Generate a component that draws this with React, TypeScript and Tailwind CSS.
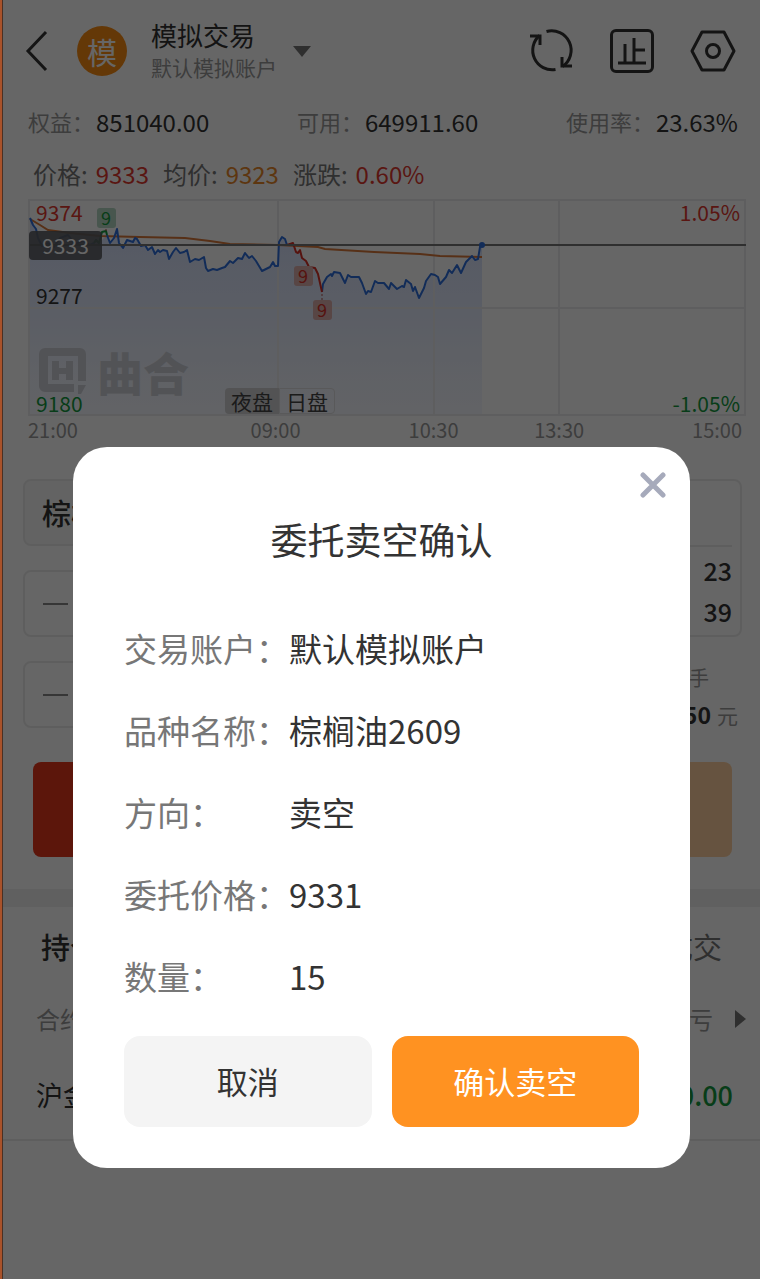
import React, { useState } from 'react';

const PRICE_NIGHT =
  '2,19 5,26 8,30 10,39 14,47 20,44 26,48 32,39 40,36 47,45 55,42 62,46 66,44 68,41 71,44';
const PRICE_GREEN = '66,44 68,41 71,44 74,33 78,32 79,36';
const PRICE_DAY =
  '79,36 82,44 86,39 89,30 91,44 95,49 99,41 105,43 107,39 109,40 113,47 117,46 120,51 124,48 127,55 130,51 132,53 135,51 139,52 141,60 145,53 148,49 152,54 156,53 159,51 162,63 167,60 171,61 176,58 178,69 180,72 185,70 189,71 194,69 197,68 202,62 205,64 210,59 214,60 217,54 221,59 224,57 228,62 234,72 238,70 242,68 245,63 247,67 250,67 251,43 254,38 257,40 259,46';
const PRICE_RED =
  '259,46 262,45 265,44 268,53 270,54 272,51 274,59 278,62 281,68 287,69 290,75 292,84 294,93';
const PRICE_LAST =
  '294,93 295,85 299,78 303,75 304,77 306,73 312,74 317,84 320,76 323,78 331,78 334,84 338,95 340,92 343,93 347,82 350,84 356,84 361,90 363,84 369,90 374,87 376,88 378,81 383,85 385,92 387,88 391,99 396,89 398,82 403,75 407,76 410,78 412,85 418,78 421,71 424,74 429,66 433,74 438,63 444,57 447,61 450,60 452,48 454,46';
const AVERAGE =
  '2,20 12,26 20,31 42,34 72,37 112,38 157,39 182,42 202,45 250,46 290,48 297,50 346,53 392,55 412,57 454,58';

const orderRows = [
  { label: '交易账户：', value: '默认模拟账户' },
  { label: '品种名称：', value: '棕榈油2609' },
  { label: '方向：', value: '卖空' },
  { label: '委托价格：', value: '9331' },
  { label: '数量：', value: '15' },
];

function Header() {
  return (
    <header className="flex h-[102px] items-center pl-[22px] pr-6">
      <button aria-label="返回">
        <svg width="24" height="42" viewBox="0 0 24 42" fill="none" stroke="#333" strokeWidth="3">
          <path d="M21 2 3 21l18 19" />
        </svg>
      </button>
      <div className="ml-7 flex size-[50px] items-center justify-center rounded-full bg-[#f98c12] text-[30px] leading-none text-white">
        模
      </div>
      <button className="ml-6 flex items-center gap-4 text-left">
        <span className="block">
          <span className="block text-[26px] leading-8 text-[#333]">模拟交易</span>
          <span className="block text-[21px] leading-8 text-[#999]">默认模拟账户</span>
        </span>
        <svg width="18" height="11" viewBox="0 0 18 11" fill="#777">
          <path d="M0 0h18L9 11z" />
        </svg>
      </button>
      <div className="ml-auto flex items-center gap-9">
        <button aria-label="刷新">
          <svg width="46" height="46" viewBox="0 0 46 46" fill="none" stroke="#333" strokeWidth="3">
            <path d="M18.5 3.5A19.5 19.5 0 0 1 34.5 38.5" />
            <path d="M27.5 41.5A19.5 19.5 0 0 1 11.5 7.5" />
            <path d="M2 8h10v9" />
            <path d="M44 38h-10v-9" />
          </svg>
        </button>
        <button aria-label="止损" className="flex size-11 items-center justify-center rounded-md border-3 border-[#333]">
          <svg width="28" height="30" viewBox="0 0 28 30" fill="none" stroke="#333" strokeWidth="3">
            <path d="M7 8v18M16 2v24M16 14h11M0 27h28" />
          </svg>
        </button>
        <button aria-label="设置">
          <svg width="46" height="42" viewBox="0 0 46 42" fill="none" stroke="#333" strokeWidth="3" strokeLinejoin="round">
            <path d="M12 2h22l10 19-10 19H12L2 21z" />
            <circle cx="23" cy="21" r="6.5" />
          </svg>
        </button>
      </div>
    </header>
  );
}

function Stat({ label, value }: { label: string; value: string }) {
  return (
    <div className="flex items-center gap-0.5 text-2xl text-[#333]">
      <span className="text-[22px] text-[#999]">{label}</span>
      <span>{value}</span>
    </div>
  );
}

function Quote({ label, value, color }: { label: string; value: string; color: string }) {
  return (
    <div className="flex items-center gap-2 text-2xl text-[#777]">
      <span>{label}</span>
      <span className={color}>{value}</span>
    </div>
  );
}

function Chart() {
  return (
    <section className="ml-[25px] mr-3.5">
      <div className="relative">
        <svg viewBox="0 0 718 217" className="block w-full" fill="none">
          <defs>
            <linearGradient id="area" x1="0" y1="0" x2="0" y2="1">
              <stop offset="0" stopColor="#6a90f0" stopOpacity="0.3" />
              <stop offset="1" stopColor="#6a90f0" stopOpacity="0.06" />
            </linearGradient>
          </defs>
          <path
            d={`M2,217 L${PRICE_NIGHT} ${PRICE_DAY} ${PRICE_RED} ${PRICE_LAST} L454,217Z`}
            fill="url(#area)"
          />
          <path
            d="M1 1H717V216H1ZM1 109H717M250 1V216M406 1V216M531 1V216"
            stroke="#ececee"
            strokeWidth="2"
          />
          <polyline points={AVERAGE} stroke="#d9793a" strokeWidth="2" />
          <g strokeWidth="2" strokeLinejoin="round">
            <polyline points={PRICE_NIGHT} stroke="#2f6fdc" />
            <polyline points={PRICE_DAY} stroke="#2f6fdc" />
            <polyline points={PRICE_LAST} stroke="#2f6fdc" />
            <polyline points={PRICE_GREEN} stroke="#149a40" />
            <polyline points={PRICE_RED} stroke="#d63027" />
          </g>
          <path d="M2 46H718" stroke="#777" strokeWidth="2" />
          <circle cx="454" cy="46" r="3" fill="#2f6fdc" />
          <path d="M78 30v4M275 71v4M294 95v6" stroke="#b05048" strokeWidth="1" strokeDasharray="2 2" />
          <rect x="69" y="9" width="19" height="20" rx="3" fill="#b4d6c2" />
          <rect x="266" y="67" width="19" height="20" rx="3" fill="#dcaeac" />
          <rect x="285" y="101" width="19" height="20" rx="3" fill="#dcaeac" />
          <g fontSize="18" textAnchor="middle">
            <text x="78" y="26" fill="#149a40">9</text>
            <text x="275" y="84" fill="#d63027">9</text>
            <text x="294" y="118" fill="#d63027">9</text>
          </g>
        </svg>

        <div className="absolute bottom-[22px] left-[11px] flex items-center gap-2.5 text-[#cdd0d8]">
          <svg width="48" height="46" viewBox="0 0 48 46" fill="currentColor">
            <path
              fillRule="evenodd"
              d="M6 0h35a6 6 0 0 1 6 6v27h-8V8H9v28h26v8H6a6 6 0 0 1-6-6V6a6 6 0 0 1 6-6Z"
            />
            <path d="M13 13h7v7h7v-7h7v19h-7v-6h-7v6h-7zM39 37h8l-5 9h-3z" />
          </svg>
          <span className="text-[46px] font-black leading-[46px]">曲合</span>
        </div>

        <div className="absolute left-2 top-0 text-[21px] leading-[26px] text-[#e0392f]">9374</div>
        <div className="absolute left-2 top-[83px] text-[21px] leading-[26px] text-[#333]">9277</div>
        <div className="absolute bottom-0 left-2 text-[21px] leading-[26px] text-[#149a40]">9180</div>
        <div className="absolute right-1.5 top-0 text-[21px] leading-[26px] text-[#e0392f]">1.05%</div>
        <div className="absolute bottom-0 right-1.5 text-[21px] leading-[26px] text-[#149a40]">-1.05%</div>
        <div className="absolute left-px top-8 flex h-[29px] w-[73px] items-center justify-center rounded bg-[#5a5c60]/90 text-[21px] text-white">
          9333
        </div>

        <div className="absolute bottom-0.5 left-[27.44%] flex text-[21px] leading-[26px] text-[#444]">
          <button className="rounded-l bg-[#cfd0d2] px-1.5">夜盘</button>
          <button className="rounded-r border border-[#dedee0] px-1.5 leading-6">日盘</button>
        </div>
      </div>
      <div className="flex h-7 items-center text-xl text-[#999]">
        <span className="w-[31%]">21:00</span>
        <span className="w-[22%]">09:00</span>
        <span className="w-[17.5%]">10:30</span>
        <span>13:30</span>
        <span className="ml-auto mr-1">15:00</span>
      </div>
    </section>
  );
}

function Stepper({ label }: { label: string }) {
  return (
    <div className="flex h-[67px] items-center rounded-lg border-2 border-[#ececec] px-[18px]">
      <button aria-label={label} className="flex h-10 w-[25px] items-center">
        <span className="h-0.5 w-full bg-[#888]" />
      </button>
    </div>
  );
}

function OrderForm() {
  return (
    <section className="mt-[35px]">
      <div className="grid grid-cols-2 gap-5 pl-5 pr-[18px]">
        <div className="flex flex-col gap-6">
          <button className="h-[67px] rounded-lg border-2 border-[#ececec] bg-[#f8f8f8] px-[17px] text-left text-[29px] font-medium text-[#333]">
            棕榈油
          </button>
          <Stepper label="减少价格" />
          <Stepper label="减少数量" />
        </div>
        <div>
          <div className="h-[158px] rounded-lg border-2 border-[#ececec] px-2 text-right text-[25px] font-medium text-[#333]">
            <div className="h-[66px] border-b-2 border-[#ececec]" />
            <div className="leading-[46px]">23</div>
            <div className="leading-9">39</div>
          </div>
          <div className="mt-[22px] pr-[33px] text-right text-xl leading-[37px] text-[#999]">手</div>
          <div className="pr-1 text-right text-[21px] leading-[37px] text-[#999]">
            <span className="mr-1.5 text-[23px] font-bold text-[#333]">50</span>元
          </div>
        </div>
      </div>
      <div className="mt-7 grid grid-cols-2 gap-5 pl-[30px] pr-7">
        <button aria-label="买多" className="h-[95px] rounded-lg bg-[#e6371c]" />
        <button aria-label="卖空" className="h-[95px] rounded-lg bg-[#ffd0a0]" />
      </div>
    </section>
  );
}

function Positions() {
  return (
    <section className="mt-8 border-t-18 border-[#f0f0f0]">
      <div className="flex h-20 items-center justify-between pl-[38px] pr-[38px] text-[29px]">
        <button className="font-medium text-[#333]">持仓</button>
        <button className="text-[#777]">成交</button>
      </div>
      <table className="w-full">
        <thead>
          <tr className="h-16 text-2xl text-[#999]">
            <th className="pl-[33px] text-left font-normal">合约</th>
            <th className="pr-3.5 font-normal">
              <span className="flex items-center justify-end gap-[22px]">
                盈亏
                <svg width="11" height="18" viewBox="0 0 11 18" fill="#777">
                  <path d="M0 0v18l11-9z" />
                </svg>
              </span>
            </th>
          </tr>
        </thead>
        <tbody>
          <tr className="h-[89px] border-b-2 border-[#eaeaea] text-[27px]">
            <td className="pl-[33px] text-[#333]">沪金</td>
            <td className="pr-[27px] text-right font-medium text-[#149a40]">0.00</td>
          </tr>
        </tbody>
      </table>
    </section>
  );
}

function ConfirmDialog({ onClose }: { onClose: () => void }) {
  return (
    <div className="fixed inset-0 left-0.5 flex items-end justify-center border-l border-[#4a3024] bg-black/60 px-[70px] pb-[111px]">
      <div
        role="dialog"
        aria-modal="true"
        aria-labelledby="confirm-title"
        className="relative w-full rounded-[34px] bg-white px-[51px] pb-[41px] pt-[62px]"
      >
        <button
          aria-label="关闭"
          onClick={onClose}
          className="absolute right-[21px] top-[22px] flex size-8 items-center justify-center"
        >
          <svg width="26" height="26" viewBox="0 0 26 26" stroke="#a6aabb" strokeWidth="5" strokeLinecap="round">
            <path d="M3 3l20 20M23 3 3 23" />
          </svg>
        </button>
        <h2 id="confirm-title" className="text-center text-[37px] leading-[60px] text-[#333]">
          委托卖空确认
        </h2>
        <dl className="mt-[39px] text-[33px]">
          {orderRows.map((row) => (
            <div key={row.label} className="flex h-[82px] items-center">
              <dt className="w-[165px] shrink-0 whitespace-nowrap text-[#777]">{row.label}</dt>
              <dd className="text-[#333]">{row.value}</dd>
            </div>
          ))}
        </dl>
        <div className="mt-[18px] grid grid-cols-2 gap-5 text-[31px]">
          <button onClick={onClose} className="h-[91px] rounded-2xl bg-[#f4f4f4] text-[#333]">
            取消
          </button>
          <button onClick={onClose} className="h-[91px] rounded-2xl bg-[#ff9221] text-white">
            确认卖空
          </button>
        </div>
      </div>
    </div>
  );
}

export default function App() {
  const [open, setOpen] = useState(true);

  return (
    <div className="min-h-screen border-l-2 border-[#a9522a] bg-white pl-px font-['Noto_Sans_CJK_SC',sans-serif]">
      <Header />
      <div className="flex h-10 items-center justify-between pl-[25px] pr-[22px]">
        <Stat label="权益：" value="851040.00" />
        <Stat label="可用：" value="649911.60" />
        <Stat label="使用率：" value="23.63%" />
      </div>
      <div className="flex h-[57px] items-center gap-3.5 pl-[30px] pt-1.5">
        <Quote label="价格:" value="9333" color="text-[#e0392f]" />
        <Quote label="均价:" value="9323" color="text-[#e8882a]" />
        <Quote label="涨跌:" value="0.60%" color="text-[#e0392f]" />
      </div>
      <Chart />
      <OrderForm />
      <Positions />
      {open && <ConfirmDialog onClose={() => setOpen(false)} />}
    </div>
  );
}
